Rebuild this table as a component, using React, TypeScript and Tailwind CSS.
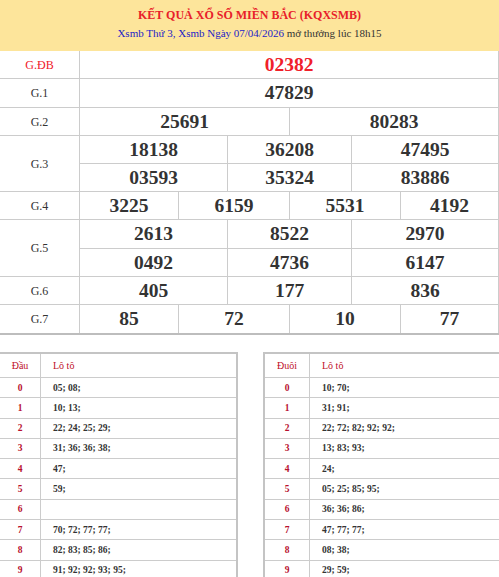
const serif = { fontFamily: '"Liberation Serif", "Times New Roman", serif' };

type Row = { label: string; h: number; cells: { w?: string; v: string }[]; red?: boolean; sub?: { h: number; cells: { w?: string; v: string }[] } };

const W3 = ['w-[148px]', 'w-[124px]', ''];
const W4 = ['w-[99px]', 'w-[111px]', 'w-[111px]', ''];

const rows: Row[] = [
  { label: 'G.ĐB', h: 28, red: true, cells: [{ v: '02382' }] },
  { label: 'G.1', h: 29, cells: [{ v: '47829' }] },
  { label: 'G.2', h: 28, cells: [{ w: 'w-[210px]', v: '25691' }, { v: '80283' }] },
  {
    label: 'G.3',
    h: 28,
    cells: ['18138', '36208', '47495'].map((v, i) => ({ w: W3[i], v })),
    sub: { h: 28, cells: ['03593', '35324', '83886'].map((v, i) => ({ w: W3[i], v })) },
  },
  { label: 'G.4', h: 28, cells: ['3225', '6159', '5531', '4192'].map((v, i) => ({ w: W4[i], v })) },
  {
    label: 'G.5',
    h: 29,
    cells: ['2613', '8522', '2970'].map((v, i) => ({ w: W3[i], v })),
    sub: { h: 28, cells: ['0492', '4736', '6147'].map((v, i) => ({ w: W3[i], v })) },
  },
  { label: 'G.6', h: 28, cells: ['405', '177', '836'].map((v, i) => ({ w: W3[i], v })) },
  { label: 'G.7', h: 28, cells: ['85', '72', '10', '77'].map((v, i) => ({ w: W4[i], v })) },
];

const dau = ['05; 08;', '10; 13;', '22; 24; 25; 29;', '31; 36; 36; 38;', '47;', '59;', '', '70; 72; 77; 77;', '82; 83; 85; 86;', '91; 92; 92; 93; 95;'];
const duoi = ['10; 70;', '31; 91;', '22; 72; 82; 92; 92;', '13; 83; 93;', '24;', '05; 25; 85; 95;', '36; 36; 86;', '47; 77; 77;', '08; 38;', '29; 59;'];

function Cells({ cells, red, h, last }: { cells: { w?: string; v: string }[]; red?: boolean; h: number; last?: boolean }) {
  return (
    <div className={`flex ${last ? '' : 'border-b border-[#cccccc]'}`} style={{ height: h }}>
      {cells.map((c, i) => (
        <div
          key={i}
          className={`${c.w || 'flex-1'} flex items-center justify-center border-r border-[#cccccc] text-[19.5px] font-bold ${red ? 'text-[#f0202a]' : 'text-[#333333]'}`}
        >
          {c.v}
        </div>
      ))}
    </div>
  );
}

function Loto({ title, data, colW, className }: { title: string; data: string[]; colW: string; className: string }) {
  return (
    <div className={`border-t-2 border-[#c4c4c4] ${className}`}>
      <div className="flex h-[24px] border-b border-[#cccccc] text-[10px] text-[#c0102a]">
        <div className={`${colW} flex items-center justify-center border-r border-[#cccccc]`}>{title}</div>
        <div className="flex items-center pl-3">Lô tô</div>
      </div>
      {data.map((d, i) => (
        <div key={i} className="flex h-[20.3px] border-b border-[#cccccc] text-[9.5px] font-bold">
          <div className={`${colW} flex items-center justify-center border-r border-[#cccccc] text-[#b8102e]`}>{i}</div>
          <div className="flex items-center pl-3 text-[#333333]">{d}</div>
        </div>
      ))}
    </div>
  );
}

export default function App() {
  return (
    <div className="w-[499px] h-[577px] overflow-hidden bg-white" style={serif}>
      <div className="h-[51px] bg-[#fde59b] flex flex-col items-center pt-[7px]">
        <div className="text-[12px] font-bold text-[#e8202a] leading-[16px]">KẾT QUẢ XỔ SỐ MIỀN BẮC (KQXSMB)</div>
        <div className="text-[11px] leading-[16px] mt-[2px]">
          <span className="text-[#1c1cc8]">Xsmb Thứ 3, Xsmb Ngày 07/04/2026</span>
          <span className="text-[#333333]"> mở thưởng lúc 18h15</span>
        </div>
      </div>
      <div className="border-b-2 border-[#bdbdbd]">
        {rows.map((r, idx) => {
          const last = idx === rows.length - 1;
          return (
            <div key={r.label} className={`flex ${last ? '' : 'border-b border-[#cccccc]'}`}>
              <div className={`w-[80px] shrink-0 flex items-center justify-center border-r border-[#cccccc] text-[12px] ${r.red ? 'text-[#f0202a]' : 'text-[#333333]'}`}>
                {r.label}
              </div>
              <div className="flex-1 flex flex-col">
                <Cells cells={r.cells} red={r.red} h={r.sub ? r.h : r.h - (last ? 0 : 1)} last={!r.sub} />
                {r.sub && <Cells cells={r.sub.cells} h={r.sub.h - 1} last />}
              </div>
            </div>
          );
        })}
      </div>
      <div className="flex mt-[17px]">
        <Loto title="Đầu" data={dau} colW="w-[41px]" className="w-[238px] border-r-2" />
        <Loto title="Đuôi" data={duoi} colW="w-[45px]" className="ml-[25px] flex-1 border-l-2" />
      </div>
    </div>
  );
}
